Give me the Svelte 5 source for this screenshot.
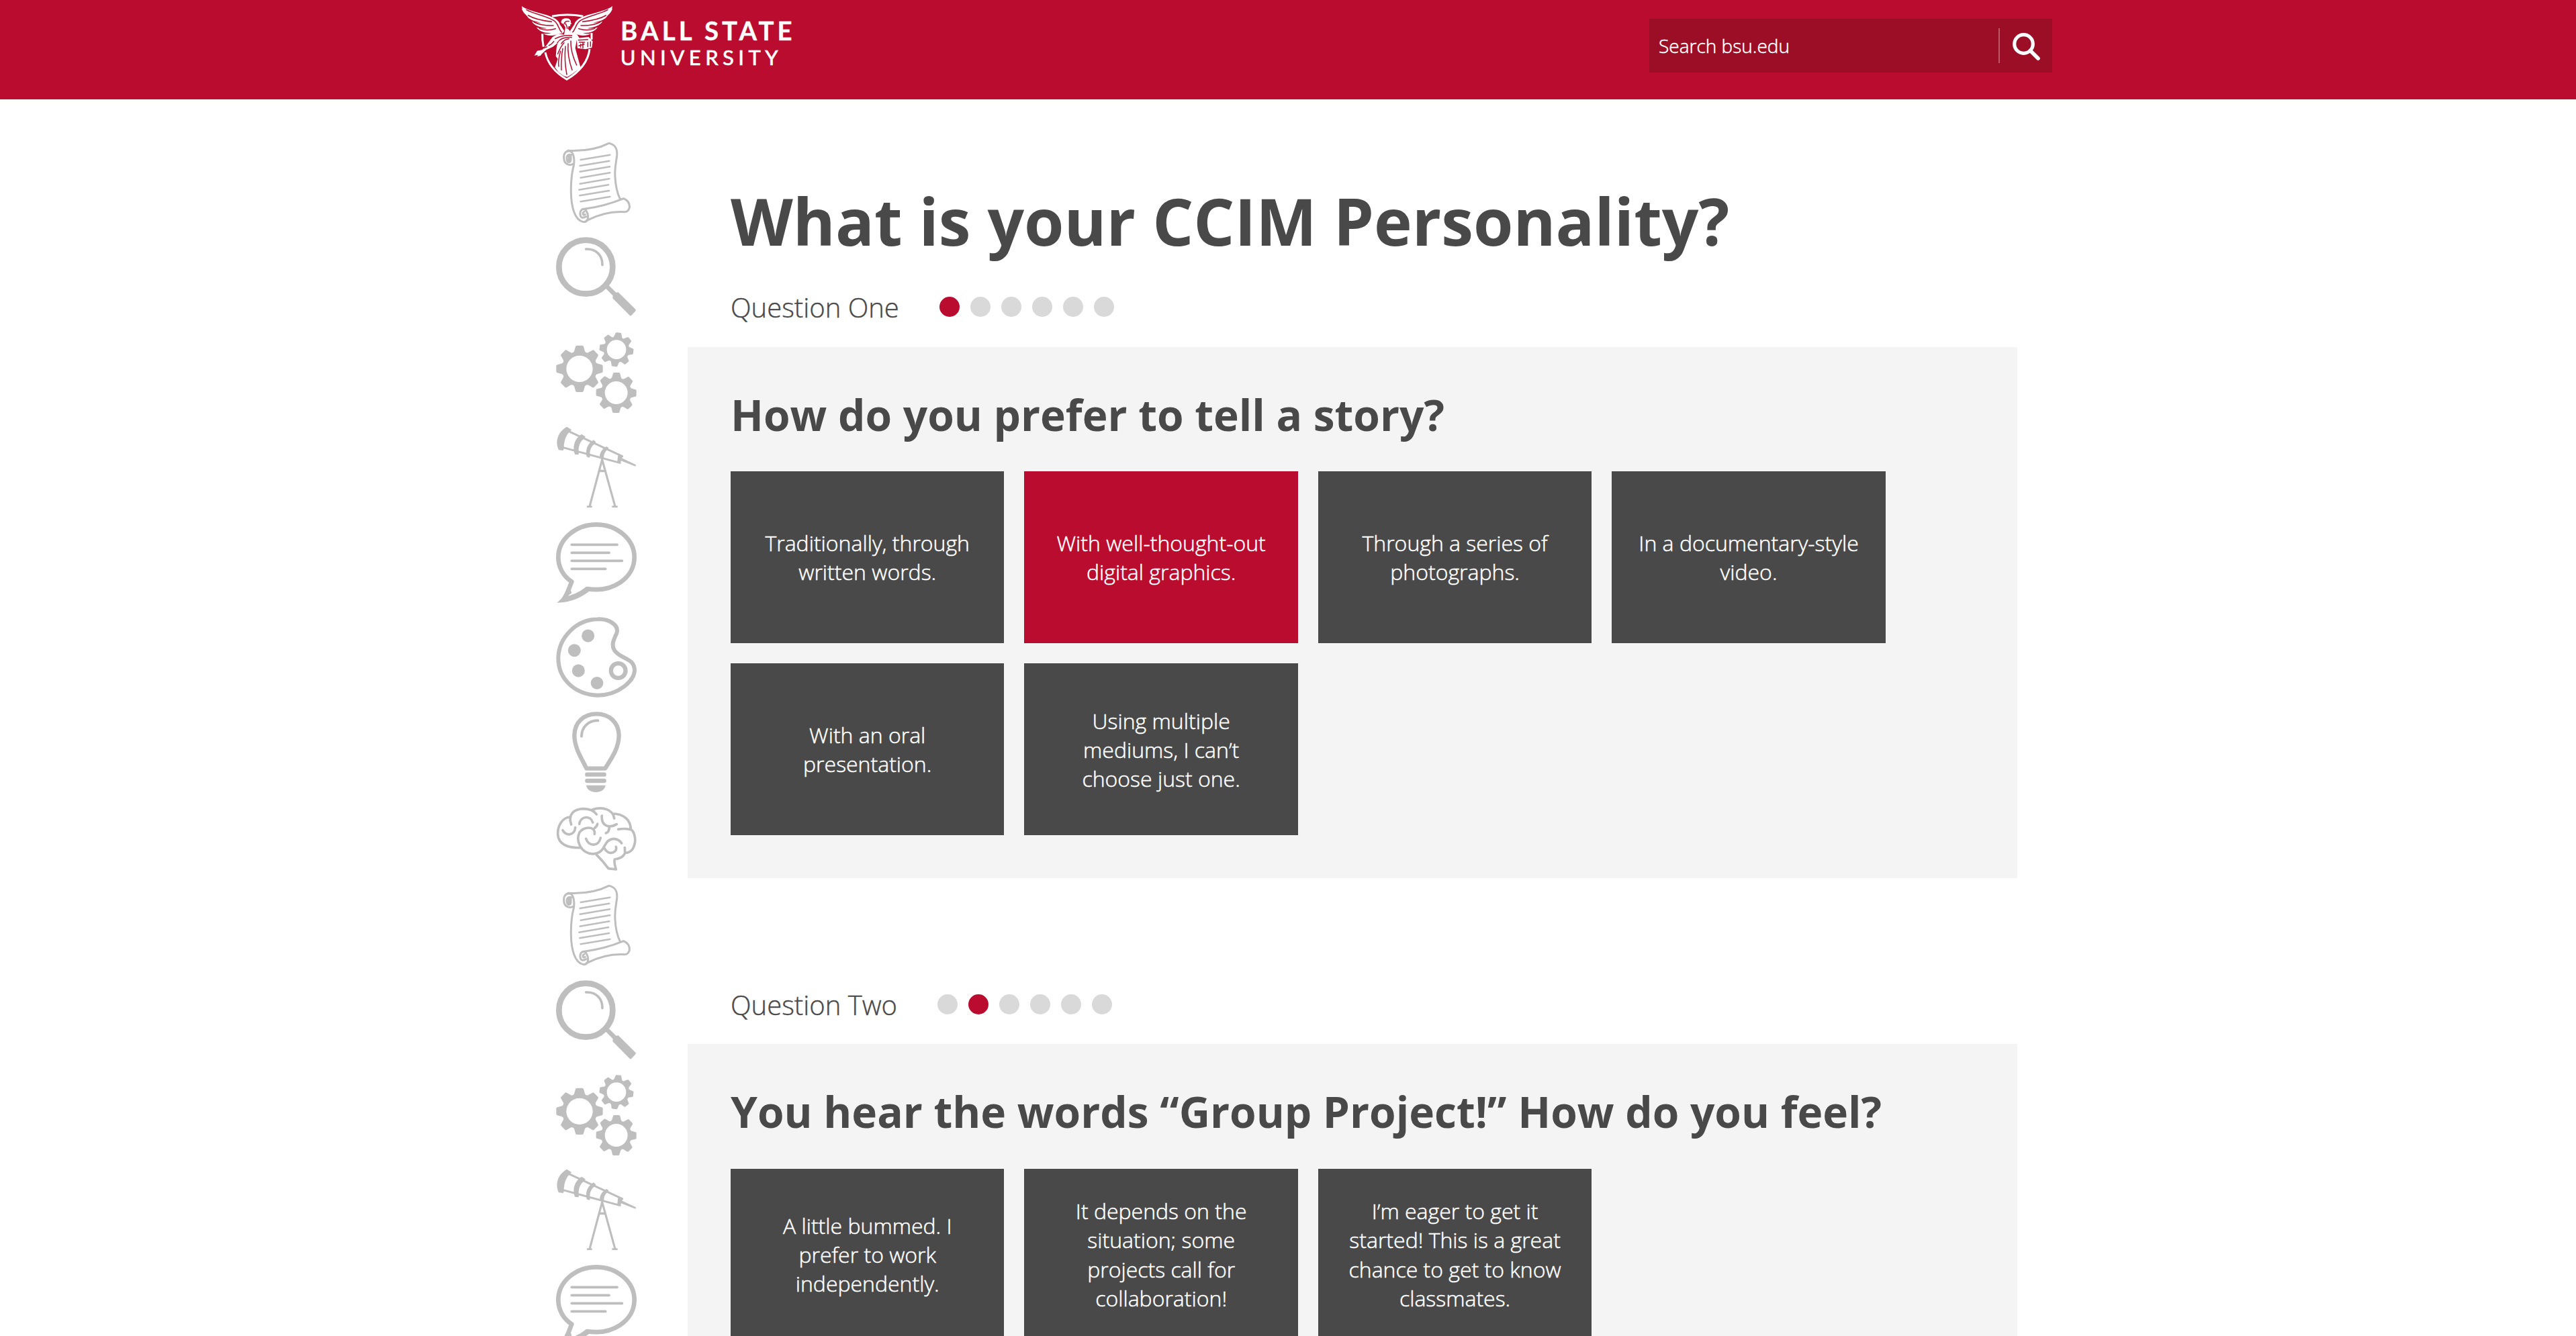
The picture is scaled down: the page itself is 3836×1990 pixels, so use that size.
<script>
  const questions = [
    {
      label: 'Question One',
      title: 'How do you prefer to tell a story?',
      options: [
        'Traditionally, through written words.',
        'With well-thought-out digital graphics.',
        'Through a series of photographs.',
        'In a documentary-style video.',
        'With an oral presentation.',
        'Using multiple mediums, I can’t choose just one.'
      ],
      chosen: 1
    },
    {
      label: 'Question Two',
      title: 'You hear the words “Group Project!” How do you feel?',
      options: [
        'A little bummed. I prefer to work independently.',
        'It depends on the situation; some projects call for collaboration!',
        'I’m eager to get it started! This is a great chance to get to know classmates.'
      ],
      chosen: -1
    }
  ];

  const dots = [0, 1, 2, 3, 4, 5];

  const icons = [
    'scroll', 'magnifier', 'gears', 'telescope', 'bubble', 'palette', 'bulb', 'brain',
    'scroll', 'magnifier', 'gears', 'telescope', 'bubble'
  ];

  const viewBoxes = {
    scroll: '54 66 360 360',
    magnifier: '54 491 360 360',
    gears: '54 43 360 360',
    telescope: '54 470 360 360',
    bubble: '54 24 360 360',
    palette: '54 448 360 360',
    bulb: '54 32 360 360',
    brain: '54 456 360 285'
  };

  // Eight-toothed gear outline with a round hole
  function gear(cx, cy, outer, hole, turn) {
    const at = (x, y, deg) => {
      const a = ((deg + turn) * Math.PI) / 180;
      const s = outer / 104;
      const px = cx + s * (x * Math.cos(a) - y * Math.sin(a));
      const py = cy + s * (x * Math.sin(a) + y * Math.cos(a));
      return px.toFixed(1) + ' ' + py.toFixed(1);
    };
    let d = '';
    for (let i = 0; i < 8; i++) {
      const t = i * 45;
      d += (i ? 'L' : 'M') + at(-24, -78, t);
      d += 'L' + at(-18, -99, t) + 'Q' + at(-17, -104, t) + ' ' + at(-12, -104, t);
      d += 'L' + at(12, -104, t) + 'Q' + at(17, -104, t) + ' ' + at(18, -99, t);
      d += 'L' + at(24, -78, t) + 'Q' + at(0, -75, t + 22.5) + ' ' + at(-24, -78, t + 45);
    }
    d += `ZM${cx - hole} ${cy}a${hole} ${hole} 0 1 0 ${hole * 2} 0a${hole} ${hole} 0 1 0 ${-hole * 2} 0Z`;
    return d;
  }
</script>

{#snippet wing()}
  <path fill="#fff" d="M51 26C66 40 104 50 150 63C195 76 216 88 221 108L241 138L233 148L214 150C196 162 163 160 147 149C161 151 174 149 184 145C156 149 127 138 117 121C132 127 148 128 163 125C135 123 104 112 96 95C108 99 122 101 136 99C104 95 80 83 74 70L61 57C56 48 49 40 53 38Z" />
  <path class="cut" d="M72 43C110 64 178 74 202 97C216 112 216 130 229 143M80 68C110 86 150 92 184 96M106 98C135 113 165 114 192 113M130 127C155 136 180 134 202 127" />
{/snippet}

<div class="page">
  <header>
    <svg class="logo" viewBox="51 20 1210 345" role="img" aria-label="Ball State University">
      <g fill="none" stroke="#fff" stroke-width="9">
        <path d="M186 72Q255 58 325 72" />
        <path d="M143 150Q142 180 148 208M363 146V176M156 233C168 290 205 326 252 354C305 322 347 280 354 218" />
      </g>
      {@render wing()}
      <g transform="translate(507 0) scale(-1 1)">{@render wing()}</g>
      <!-- Winged figure: head, torso, outstretched arm and robe -->
      <path fill="#fff" d="M227 101C226 86 238 80 250 81C264 80 272 90 270 99L273 106L267 109L268 116L259 117L258 128L270 143L296 150L308 168L296 180L290 214L303 262L314 302L292 318L276 330L254 343L238 338L216 322L199 300L212 262L203 250C206 222 205 208 212 190L190 208L160 222L142 238L134 248L118 252L124 244L107 247L120 226L142 222L160 203L188 165L214 149L240 154L246 122L238 108Z" />
      <path class="cut" d="M240 106Q244 91 262 94M246 104Q252 112 254 126M200 172Q235 154 275 158M210 190Q225 164 274 166M172 202Q184 198 194 184M150 214L164 208M228 194Q240 174 262 172M270 182Q268 230 296 290M258 194Q254 250 276 312M246 206Q240 270 252 332M234 216Q226 260 228 312M224 228Q212 270 216 296M240 190Q224 206 212 240" />
      <path fill="#fff" d="M296 170L350 164L368 184L364 212L336 219L300 214Z" />
      <path class="cut" d="M304 178L346 176M308 188H332M314 196V210M324 190V214M346 188V208M306 204L330 196M358 186V206" />
      <g fill="#fff" stroke="#fff" font-family="Lato, 'Open Sans', sans-serif">
        <text x="492" y="178.5" font-size="115" font-weight="700" textLength="767" stroke-width="1">BALL STATE</text>
        <text x="491" y="290" font-size="93" font-weight="400" textLength="705" stroke-width="2">UNIVERSITY</text>
      </g>
    </svg>

    <div class="search">
      <span class="placeholder">Search bsu.edu</span>
      <button aria-label="Search">
        <svg viewBox="0 0 41 41" fill="none" stroke="#fff">
          <circle cx="16.5" cy="16.5" r="13.8" stroke-width="5.2" />
          <path d="M26.5 26.5L38 38" stroke-width="5.6" stroke-linecap="round" />
        </svg>
      </button>
    </div>
  </header>

  <div class="body">
    <aside>
      {#each icons as name}
        <svg class="icon" class:short={name === 'brain'} viewBox={viewBoxes[name]}>
          {#if name === 'scroll'}
            <g class="line" stroke-width="9">
              <path d="M108 103C170 106 235 98 290 70C318 76 329 92 326 126C322 160 315 180 318 222C320 260 326 290 340 319" />
              <path d="M130 163C110 172 90 162 89 136C88 112 100 103 114 105C132 108 138 140 133 170C125 200 120 240 121 290C122 350 136 416 178 422C200 422 202 392 188 370C174 356 160 370 162 388C164 404 174 406 188 398" />
              <path d="M122 122C106 116 98 130 104 148C108 158 118 156 120 146V124M112 128V148M180 376C170 382 174 396 184 388M180 364C240 356 300 340 356 317C376 326 384 340 382 358C378 372 372 377 360 377C300 374 240 390 190 416" />
              <path stroke-width="7.5" d="M164 144L295 122M161 171L292 149M161 197L294 175M164 224L295 202M161 251L292 229M157 278L288 256M160 304L291 282M164 331L295 309" />
            </g>
          {:else if name === 'magnifier'}
            <circle cx="187" cy="625" r="120" class="line" stroke-width="26" />
            <path class="line" stroke-width="11" d="M188 545C235 543 262 575 261 616" />
            <path class="line" stroke-width="20" d="M282 713L322 753" />
            <path class="fill" d="M318 741L332 738L409 814Q413 818 409 822L391 841Q387 844 383 841L307 765L308 752Z" />
          {:else if name === 'gears'}
            <g class="fill" fill-rule="evenodd">
              <path d={gear(159, 206, 104, 59, 0)} />
              <path d={gear(324, 120, 76, 43, 7)} />
              <path d={gear(323, 313, 90, 51, 1)} />
            </g>
          {:else if name === 'telescope'}
            <g class="fill">
              <path d="M102 469L123 482L119 488C99 502 88 535 89 568L86 575L66 573C48 535 62 492 102 469Z" />
              <path d="M168 502L185 513L182 521C162 530 151 560 156 590L153 594L138 592C126 560 136 522 168 502Z" />
              <path d="M222 528L232 537L228 544C210 556 202 578 206 602L203 607L191 603C184 572 194 545 222 528Z" />
              <path d="M279 557L289 563L286 570C272 580 266 595 268 612L250 611C246 592 256 570 279 557Z" />
              <path d="M331 597L354 599L348 610C344 618 343 626 344 634L327 630Z" />
              <path d="M346 608L411 639L409 646L344 621Z" />
              <path d="M192 822H215V830H192ZM304 822H329V830H304ZM246 661H276V672H246Z" />
            </g>
            <path class="line" stroke-width="9" stroke-linecap="butt" d="M112 490L350 601M86 562L338 630" />
            <path class="line" stroke-width="9.5" stroke-linecap="butt" d="M261 612L204 825M259 612L318 825" />
          {:else if name === 'bubble'}
            <path class="line" stroke-width="20" stroke-linejoin="miter" d="M124 289C88 266 64 226 64 181C64 99 142 34 234 34C326 34 404 99 404 181C404 274 304 340 193 321C162 346 125 361 88 368C101 351 114 316 124 289Z" />
            <path class="fill" d="M58 383C82 364 104 340 110 300L124 340L101 357C140 350 170 334 188 312L204 331C166 360 120 384 58 383Z" />
            <path class="line" stroke-width="11.5" d="M124 124H327M124 160H291M124 196H349M124 232H275" />
          {:else if name === 'palette'}
            <path class="line" stroke-width="18" d="M240 458C293 455 336 486 325 520C311 551 300 573 315 597C340 637 405 628 405 688C402 733 335 797 240 798C139 794 64 727 64 631C66 538 145 460 240 458Z" />
            <g class="fill">
              <circle cx="197" cy="532" r="28.5" />
              <circle cx="136" cy="597" r="28.5" />
              <circle cx="154" cy="688" r="28.5" />
              <circle cx="237" cy="743" r="28" />
            </g>
            <circle class="line" cx="332" cy="688" r="32.5" stroke-width="19" />
          {:else if name === 'bulb'}
            <path class="line" stroke-width="19" stroke-linejoin="miter" d="M190 286C168 240 136 193 136 138C137 80 178 42 235 42C292 42 334 80 335 138C334 198 300 244 273 286Z" />
            <path class="line" stroke-width="12" d="M168 142C168 100 200 71 241 72" />
            <path class="line" stroke-width="19" d="M193 313H269M193 341H269" />
            <path class="fill" d="M189 361H275C270 402 194 402 189 361Z" />
          {:else}
            <g class="line" stroke-width="11">
              <path d="M122 534C105 490 135 464 178 464C205 465 223 472 235 489" />
              <path d="M119 501C83 501 61 540 62 578C64 622 105 640 162 638" />
              <path d="M216 468C263 452 309 468 314 507M308 486C355 486 388 514 388 557C365 552 350 552 332 556M388 556C419 578 414 661 362 662L361 638M362 662C354 680 340 686 316 690C312 708 318 718 322 735L288 731C274 712 256 690 236 671" />
              <path d="M226 577C232 538 175 544 159 569C140 610 166 661 217 666C282 664 260 601 312 598C330 600 340 606 347 618" />
              <path d="M270 640C288 676 330 660 322 634M188 598C199 634 245 634 253 594M226 551C232 546 238 540 239 532M158 532C164 496 208 492 218 525M84 560C98 588 138 584 140 548M259 495C255 535 286 556 325 533M292 544C292 562 288 570 277 573" />
            </g>
          {/if}
        </svg>
      {/each}
    </aside>

    <main>
      <h1>What is your CCIM Personality?</h1>
      {#each questions as q, qi}
        <section>
          <div class="progress">
            <span class="label">{q.label}</span>
            <div class="dots">
              {#each dots as d}
                <i class:current={d === qi}></i>
              {/each}
            </div>
          </div>
          <div class="panel">
            <h2>{q.title}</h2>
            <div class="options">
              {#each q.options as text, i}
                <div class="option" class:chosen={i === q.chosen}>{text}</div>
              {/each}
            </div>
          </div>
        </section>
      {/each}
    </main>
  </div>
</div>

<style>
  :global(body) {
    margin: 0;
    background: #fff;
  }
  .page {
    height: 1990px;
    overflow: hidden;
    font-family: 'Open Sans', 'Noto Sans', sans-serif;
    color: #494949;
  }
  header {
    box-sizing: border-box;
    height: 148px;
    padding: 0 780px 0 777px;
    display: flex;
    align-items: flex-start;
    justify-content: space-between;
    background: #ba0c2f;
  }
  .logo {
    width: 403.33px;
    height: 115px;
    margin-top: 6.67px;
  }
  .cut {
    fill: none;
    stroke: #ba0c2f;
    stroke-width: 4.5;
    stroke-linecap: round;
  }
  .search {
    box-sizing: border-box;
    width: 600px;
    height: 80px;
    margin-top: 28px;
    padding-left: 14px;
    display: flex;
    align-items: center;
    justify-content: space-between;
    background: #9c0e26;
    color: #fff;
  }
  .placeholder {
    font-size: 28px;
    line-height: 38px;
    font-weight: 300;
    -webkit-text-stroke: 0.5px currentColor;
  }
  button {
    box-sizing: border-box;
    width: 80px;
    height: 52px;
    padding: 0 0 0 19px;
    border: 0;
    border-left: 2px solid #bd5766;
    background: none;
    display: flex;
    align-items: center;
  }
  button svg {
    width: 41px;
    height: 41px;
    margin-top: 3px;
  }
  .body {
    display: flex;
    gap: 76px;
    padding-left: 828px;
  }
  aside {
    width: 120px;
    padding-top: 64px;
    display: flex;
    flex-direction: column;
    gap: 21.4px;
  }
  .icon {
    display: block;
    flex: none;
    width: 120px;
    height: 120px;
  }
  .icon.short {
    height: 95px;
  }
  .line {
    fill: none;
    stroke: #bebebe;
    stroke-linecap: round;
    stroke-linejoin: round;
  }
  .fill {
    fill: #bebebe;
  }
  main {
    width: 1980px;
    padding-top: 133px;
  }
  h1 {
    margin: 0 0 60.3px;
    padding-left: 64px;
    font-size: 96px;
    line-height: 96px;
    font-weight: 700;
  }
  section {
    margin-bottom: 167.2px;
  }
  .progress {
    height: 40px;
    padding-left: 64px;
    margin-bottom: 39.8px;
    display: flex;
    align-items: center;
    gap: 60px;
  }
  .label {
    padding-top: 2px;
    font-size: 40px;
    line-height: 40px;
    font-weight: 300;
    -webkit-text-stroke: 0.4px currentColor;
  }
  .dots {
    display: flex;
    gap: 16px;
  }
  .dots i {
    width: 30px;
    height: 30px;
    border-radius: 50%;
    background: #d9d9d9;
  }
  .dots i.current {
    background: #ba0c2f;
  }
  .panel {
    padding: 68.6px 64px 64px;
    background: #f4f4f4;
  }
  h2 {
    margin: 0 0 52.7px;
    font-size: 64px;
    line-height: 64px;
    font-weight: 700;
  }
  .options {
    display: flex;
    flex-wrap: wrap;
    gap: 30px;
  }
  .option {
    box-sizing: border-box;
    width: 22%;
    height: 256px;
    padding: 0 36px;
    display: flex;
    align-items: center;
    justify-content: center;
    text-align: center;
    background: #494949;
    color: #fff;
    font-size: 32px;
    line-height: 43.2px;
    font-weight: 300;
    -webkit-text-stroke: 0.5px currentColor;
  }
  .option.chosen {
    background: #ba0c2f;
  }
</style>
